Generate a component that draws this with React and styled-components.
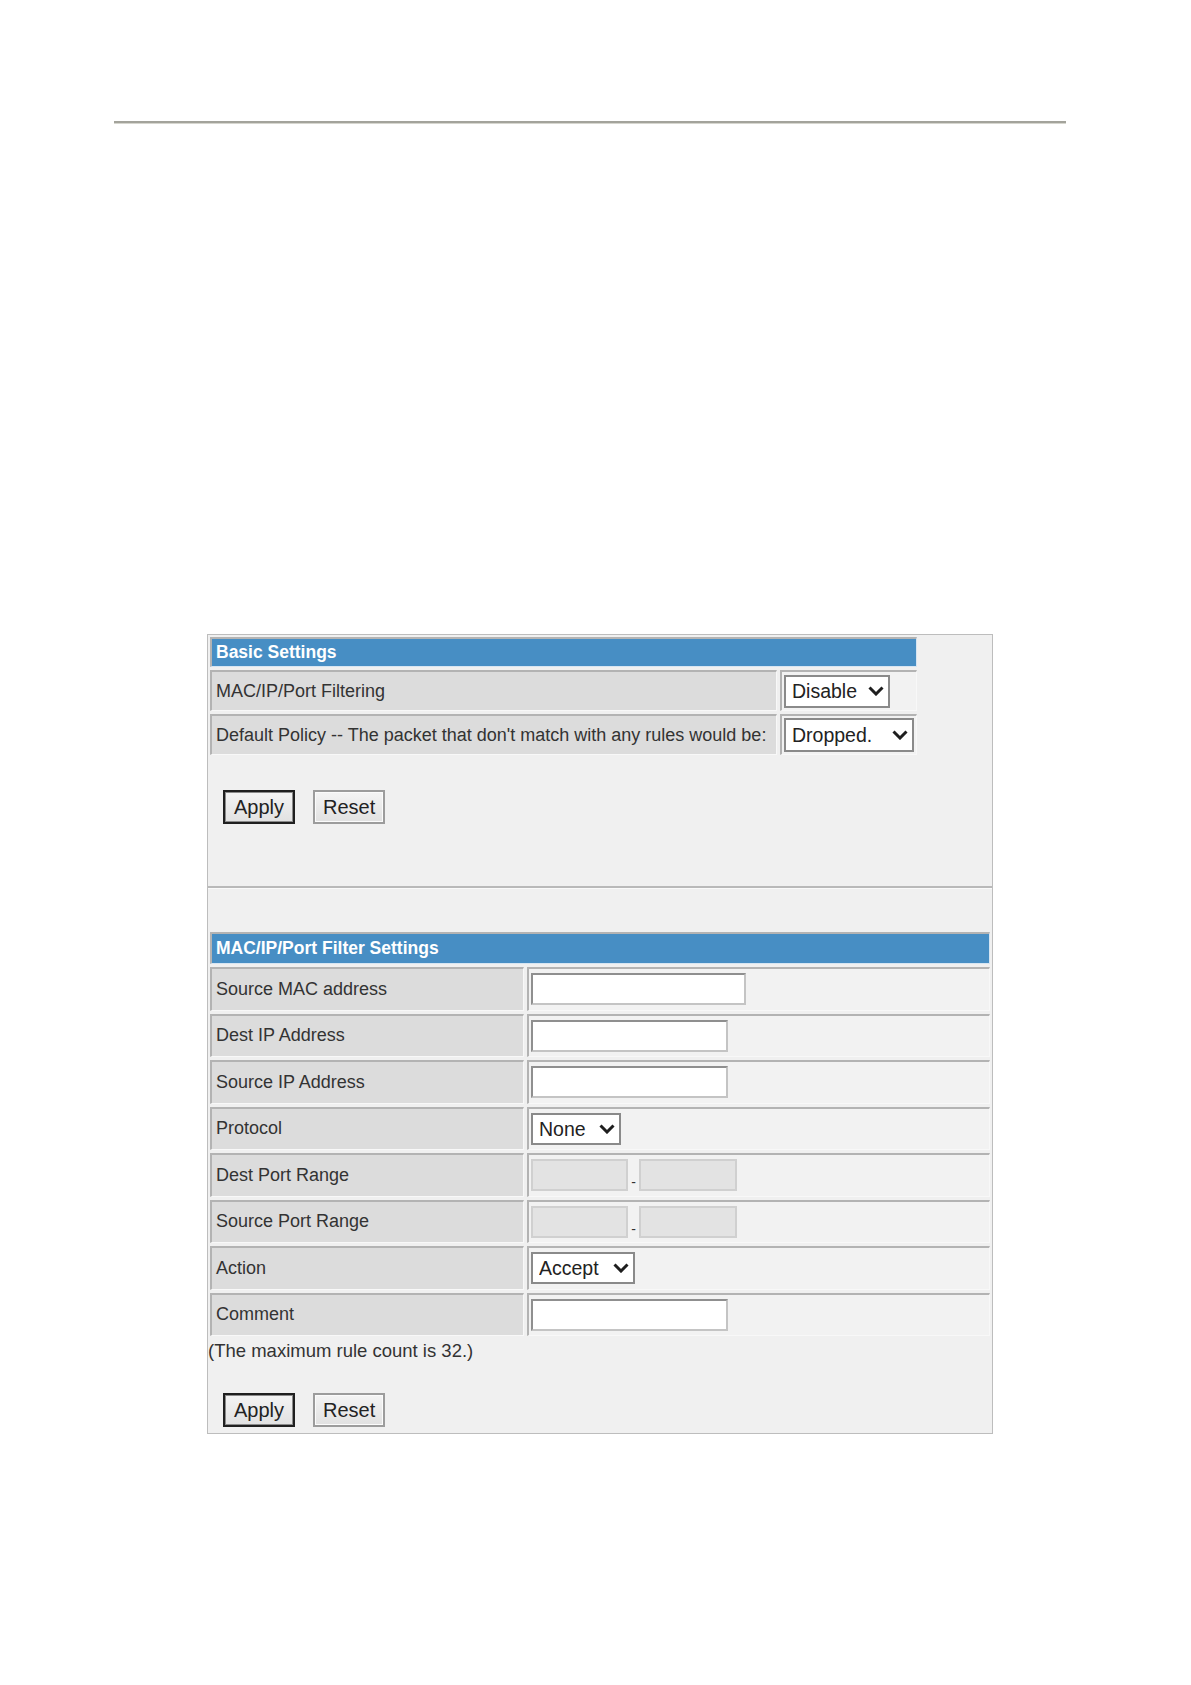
import React from "react";
import styled, { createGlobalStyle } from "styled-components";

const GlobalStyle = createGlobalStyle`
  body {
    margin: 0;
    background: #ffffff;
    font-family: "Liberation Sans", Arial, sans-serif;
    color: #333333;
  }
`;

const Page = styled.div`
  width: 1191px;
  min-height: 1685px;
  padding-top: 121px;
  box-sizing: border-box;
`;

const Rule = styled.hr`
  margin: 0 0 0 114px;
  width: 952px;
  height: 0;
  border: 0;
  border-top: 2px solid #a3a39b;
  border-bottom: 1px solid #d6d6cf;
`;

const Panel = styled.div`
  margin: 510px 0 0 207px;
  width: 786px;
  height: 800px;
  box-sizing: border-box;
  border: 1px solid #bdbdbd;
  background: #f0f0f0;
  display: flex;
  flex-direction: column;
`;

const Table = styled.table`
  width: ${(p) => p.$w}px;
  margin: -1px;
  border-collapse: separate;
  border-spacing: 3px;
  table-layout: fixed;
`;

const Row = styled.tr`
  height: ${(p) => p.$h}px;
`;

const Cell = styled.td`
  box-sizing: border-box;
  border-style: solid;
  border-width: 2px 1px 1px 2px;
  border-color: #b3b3b3 #f8f8f8 #f8f8f8 #b3b3b3;
  background: ${(p) => (p.$label ? "#dcdcdc" : "#f2f2f2")};
  padding: 0 ${(p) => (p.$label ? "4px" : "2px")};
  font-size: 18px;
  color: #333333;
  vertical-align: middle;
  white-space: nowrap;
`;

const HeadCell = styled.td`
  box-sizing: border-box;
  border-style: solid;
  border-width: 2px 1px 1px 2px;
  border-color: #b3b3b3 #d6e5f2 #d6e5f2 #b3b3b3;
  background: #478ec4;
  color: #ffffff;
  font-weight: bold;
  font-size: 17.5px;
  padding: 0 4px;
  vertical-align: middle;
`;

const ButtonBar = styled.div`
  display: flex;
  gap: 18px;
  padding-left: 15px;
  margin-top: ${(p) => p.$top}px;
`;

const Button = styled.button`
  height: 34px;
  padding: 0 ${(p) => (p.$primary ? "9px" : "8px")};
  font-family: "Liberation Sans", Arial, sans-serif;
  font-size: 20px;
  color: #222222;
  background: linear-gradient(#f4f4f4, #e1e1e1);
  border: 2px solid ${(p) => (p.$primary ? "#1f1f1f" : "#9c9c9c")};
  box-shadow: inset 0 0 0 1px ${(p) => (p.$primary ? "#8a8a8a" : "#fbfbfb")};
  border-radius: 0;
`;

const Divider = styled.div`
  margin-top: 62px;
  border-top: 2px solid #b9b9b9;
  border-bottom: 1px solid #fafafa;
`;

const Spacer = styled.div`
  height: ${(p) => p.$h}px;
  flex: none;
`;

const SelectWrap = styled.span`
  position: relative;
  display: inline-flex;
  width: ${(p) => p.$w}px;
  height: ${(p) => p.$h}px;
  vertical-align: middle;
`;

const NativeSelect = styled.select`
  appearance: none;
  width: 100%;
  height: 100%;
  box-sizing: border-box;
  border: 2px solid #8a8a8a;
  border-radius: 0;
  background: #ffffff;
  font-family: "Liberation Sans", Arial, sans-serif;
  font-size: 19.5px;
  color: #222222;
  padding: 0 0 0 6px;
`;

const Chevron = styled.svg`
  position: absolute;
  right: 6px;
  top: 50%;
  transform: translateY(-50%);
  pointer-events: none;
`;

const TextInput = styled.input`
  box-sizing: border-box;
  width: ${(p) => p.$w}px;
  height: 32px;
  border: 2px solid;
  border-color: #8f8f8f #c4c4c4 #c4c4c4 #8f8f8f;
  background: #ffffff;
  vertical-align: middle;
  padding: 0 4px;

  &:disabled {
    background: #e3e3e3;
    border-color: #d0d0d0;
  }
`;

const Dash = styled.span`
  display: inline-block;
  width: 11px;
  text-align: center;
  font-size: 14px;
  vertical-align: bottom;
  line-height: 18px;
`;

const Note = styled.div`
  font-size: 18.5px;
  line-height: 26px;
  color: #333333;
`;

function Select({ w, h, value, options }) {
  return (
    <SelectWrap $w={w} $h={h}>
      <NativeSelect defaultValue={value}>
        {options.map((o) => (
          <option key={o}>{o}</option>
        ))}
      </NativeSelect>
      <Chevron width="16" height="10" viewBox="0 0 16 10">
        <path d="M1.5 1.5 L8 8 L14.5 1.5" fill="none" stroke="#1e1e1e" strokeWidth="3" />
      </Chevron>
    </SelectWrap>
  );
}

const filterRows = [
  { label: "Source MAC address", input: <TextInput $w={215} /> },
  { label: "Dest IP Address", input: <TextInput $w={197} /> },
  { label: "Source IP Address", input: <TextInput $w={197} /> },
  {
    label: "Protocol",
    input: <Select w={90} h={32} value="None" options={["None", "TCP", "UDP", "ICMP"]} />,
  },
  {
    label: "Dest Port Range",
    input: (
      <>
        <TextInput $w={97} disabled />
        <Dash>-</Dash>
        <TextInput $w={98} disabled />
      </>
    ),
  },
  {
    label: "Source Port Range",
    input: (
      <>
        <TextInput $w={97} disabled />
        <Dash>-</Dash>
        <TextInput $w={98} disabled />
      </>
    ),
  },
  {
    label: "Action",
    input: <Select w={104} h={32} value="Accept" options={["Accept", "Drop"]} />,
  },
  { label: "Comment", input: <TextInput $w={197} /> },
];

export default function App() {
  return (
    <Page>
      <GlobalStyle />
      <Rule />
      <Panel>
        <Table $w={713}>
          <colgroup>
            <col style={{ width: 567 }} />
            <col />
          </colgroup>
          <tbody>
            <Row $h={30}>
              <HeadCell colSpan={2}>Basic Settings</HeadCell>
            </Row>
            <Row $h={41}>
              <Cell $label>MAC/IP/Port Filtering</Cell>
              <Cell>
                <Select w={106} h={33} value="Disable" options={["Disable", "Enable"]} />
              </Cell>
            </Row>
            <Row $h={41}>
              <Cell $label>Default Policy -- The packet that don't match with any rules would be:</Cell>
              <Cell>
                <Select w={130} h={34} value="Dropped." options={["Dropped.", "Accepted."]} />
              </Cell>
            </Row>
          </tbody>
        </Table>

        <ButtonBar $top={33}>
          <Button $primary>Apply</Button>
          <Button>Reset</Button>
        </ButtonBar>

        <Divider />
        <Spacer $h={41} />

        <Table $w={786}>
          <colgroup>
            <col style={{ width: 314 }} />
            <col />
          </colgroup>
          <tbody>
            <Row $h={32}>
              <HeadCell colSpan={2}>MAC/IP/Port Filter Settings</HeadCell>
            </Row>
            {filterRows.map((r) => (
              <Row $h={43.5} key={r.label}>
                <Cell $label>{r.label}</Cell>
                <Cell>{r.input}</Cell>
              </Row>
            ))}
          </tbody>
        </Table>

        <Note>(The maximum rule count is 32.)</Note>

        <ButtonBar $top={29}>
          <Button $primary>Apply</Button>
          <Button>Reset</Button>
        </ButtonBar>
      </Panel>
    </Page>
  );
}
